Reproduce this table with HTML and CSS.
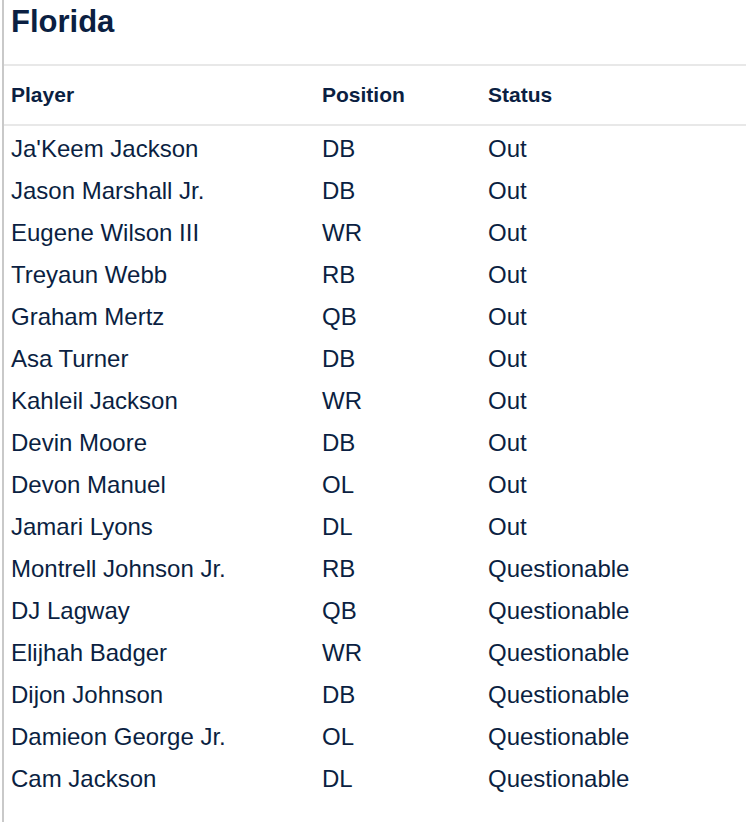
FILE: index.html
```html
<!DOCTYPE html>
<html>
<head>
<meta charset="utf-8">
<link rel="stylesheet" href="styles.css">
</head>
<body>
<div class="panel">
  <h2 class="title">Florida</h2>
  <table class="injuries">
    <colgroup><col class="c1"><col class="c2"><col class="c3"></colgroup>
    <thead>
      <tr><th>Player</th><th>Position</th><th>Status</th></tr>
    </thead>
    <tbody>
      <tr><td>Ja'Keem Jackson</td><td>DB</td><td>Out</td></tr>
      <tr><td>Jason Marshall Jr.</td><td>DB</td><td>Out</td></tr>
      <tr><td>Eugene Wilson III</td><td>WR</td><td>Out</td></tr>
      <tr><td>Treyaun Webb</td><td>RB</td><td>Out</td></tr>
      <tr><td>Graham Mertz</td><td>QB</td><td>Out</td></tr>
      <tr><td>Asa Turner</td><td>DB</td><td>Out</td></tr>
      <tr><td>Kahleil Jackson</td><td>WR</td><td>Out</td></tr>
      <tr><td>Devin Moore</td><td>DB</td><td>Out</td></tr>
      <tr><td>Devon Manuel</td><td>OL</td><td>Out</td></tr>
      <tr><td>Jamari Lyons</td><td>DL</td><td>Out</td></tr>
      <tr><td>Montrell Johnson Jr.</td><td>RB</td><td>Questionable</td></tr>
      <tr><td>DJ Lagway</td><td>QB</td><td>Questionable</td></tr>
      <tr><td>Elijhah Badger</td><td>WR</td><td>Questionable</td></tr>
      <tr><td>Dijon Johnson</td><td>DB</td><td>Questionable</td></tr>
      <tr><td>Damieon George Jr.</td><td>OL</td><td>Questionable</td></tr>
      <tr><td>Cam Jackson</td><td>DL</td><td>Questionable</td></tr>
    </tbody>
  </table>
</div>
</body>
</html>
```
FILE: styles.css
```css
html, body {
  margin: 0;
  padding: 0;
  background: #ffffff;
}
body {
  font-family: "Liberation Sans", Arial, sans-serif;
  color: #0b1f42;
}
.panel {
  margin-left: 2px;
  border-left: 2px solid #c9c9c9;
  min-height: 822px;
  box-sizing: border-box;
  overflow: hidden;
}
.title {
  margin: 3px 0 24px 0;
  padding-left: 7px;
  font-size: 31px;
  line-height: 37px;
  font-weight: 700;
}
.injuries {
  border-collapse: collapse;
  width: 760px;
  table-layout: fixed;
}
.c1 { width: 311px; }
.c2 { width: 166px; }
.c3 { width: 283px; }
.injuries th {
  text-align: left;
  font-size: 21px;
  font-weight: 700;
  height: 58px;
  padding: 0 0 0 7px;
  line-height: 24px;
  vertical-align: middle;
  border-top: 2px solid #e8e8e8;
  border-bottom: 2px solid #e8e8e8;
}
.injuries td {
  font-size: 24px;
  line-height: 38px;
  padding: 4px 0 0 7px;
  height: 38px;
  white-space: nowrap;
}
```
